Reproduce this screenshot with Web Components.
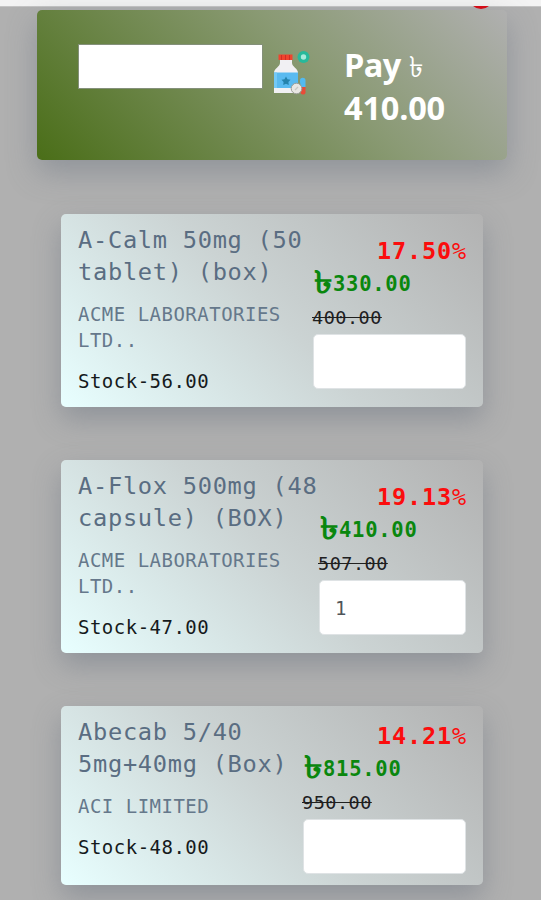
<!DOCTYPE html>
<html lang="en">
<head>
<meta charset="utf-8">
<title>Medicine order</title>
<style>
  body {
    margin: 0;
    height: 900px;
    overflow: hidden;
    background: #b0b0b0;
    font-family: "DejaVu Sans Mono", "Liberation Mono", monospace;
  }
</style>
</head>
<body>
<order-page>
  <pay-header amount="410.00"></pay-header>
  <medicine-card name="A-Calm 50mg (50 tablet) (box)" maker="ACME LABORATORIES LTD.." stock="56.00"
    discount="17.50%" price="330.00" old="400.00" style="--side: 153px"></medicine-card>
  <medicine-card name="A-Flox 500mg (48 capsule) (BOX)" maker="ACME LABORATORIES LTD.." stock="47.00"
    discount="19.13%" price="410.00" old="507.00" qty="1" style="--side: 147px"></medicine-card>
  <medicine-card name="Abecab 5/40 5mg+40mg (Box)" maker="ACI LIMITED" stock="48.00"
    discount="14.21%" price="815.00" old="950.00" style="--side: 163px; --height: 179px"></medicine-card>
</order-page>

<script>
class OrderPage extends HTMLElement {
  constructor() {
    super();
    this.attachShadow({mode: 'open'});
    this.shadowRoot.innerHTML = `
      <style>
        :host { display: flex; flex-direction: column; height: 900px; }
        .top {
          flex: none;
          display: flex;
          justify-content: flex-end;
          height: 6px;
          background: #f3f3f3;
          border-bottom: 1px solid #c4c4c4;
        }
        /* only the lower edge of the cart badge shows under the bar */
        .clip { position: relative; top: 6px; height: 4px; width: 24px; margin-right: 48px; overflow: hidden; }
        .badge { width: 24px; height: 24px; margin-top: -21px; border-radius: 50%; background: #d40c18; }
        .list { display: flex; flex-direction: column; gap: 53px; padding: 3px 34px 0 37px; }
      </style>
      <div class="top"><div class="clip"><div class="badge"></div></div></div>
      <div class="list"><slot></slot></div>
    `;
  }
}

class MedicineIcon extends HTMLElement {
  constructor() {
    super();
    this.attachShadow({mode: 'open'});
    this.shadowRoot.innerHTML = `
      <style>
        :host { display: block; width: 38px; height: 46px; }
        svg { display: block; }
      </style>
      <svg width="38" height="46" viewBox="0 0 38 46">
        <path d="M7 9h12v4c0 4 6 5 6 10v20H1V23c0-5 6-6 6-10z" fill="#f1f0f3"/>
        <path d="M5.500 4.500h14v5.500h-14z" fill="#f0442e"/>
        <path d="M8.500 5v5M12.500 5v5M16.500 5v5" stroke="#d02e25" stroke-width="1"/>
        <path d="M1 22.500h24v15.500H1z" fill="#59baf0"/>
        <path d="M1 22.500h3v15.500H1z" fill="#73c9f7"/>
        <path d="M13 26.500l1.500 2.700 3 .5-2.100 2.200.4 3.100-2.800-1.300-2.800 1.300.4-3.100-2.100-2.200 3-.5z" fill="#2583ad"/>
        <path d="M27 32v-1.500a2.700 2.700 0 0 1 5.500 0V37H28z" fill="#52baf1"/>
        <path d="M28 37h4.500v4.500a2.500 2.500 0 0 1-5 1z" fill="#e94b38"/>
        <circle cx="23.500" cy="38.500" r="5.300" fill="#e9e7e3" stroke="#9b9d97" stroke-width="1"/>
        <path d="M22 40l3-3" stroke="#c8c8c3" stroke-width="1.300"/>
        <circle cx="30.500" cy="7" r="6" fill="#27b99b"/>
        <circle cx="30.500" cy="7" r="2.700" fill="#a8eadb"/>
      </svg>
    `;
  }
}

class PayHeader extends HTMLElement {
  constructor() {
    super();
    this.attachShadow({mode: 'open'});
    this.shadowRoot.innerHTML = `
      <style>
        :host {
          display: flex;
          align-items: flex-start;
          box-sizing: border-box;
          height: 150px;
          margin-bottom: 1px;
          padding: 34px 41px;
          border-radius: 5px;
          background: linear-gradient(45deg, #4a6e18, #8a9a74 60%, #b0b0b0);
          box-shadow: 0 12px 30px rgba(98, 108, 122, .42);
        }
        input {
          box-sizing: border-box;
          width: 185px;
          height: 45px;
          border: 1px solid #84907a;
          background: #fff;
          padding: 0 8px;
          outline: none;
        }
        medicine-icon { margin: 6px 33px 0 10px; }
        .pay {
          width: 120px;
          color: #fff;
          font: 700 32.500px/42px "Open Sans", "Noto Sans", sans-serif;
          letter-spacing: -.6px;
        }
        .taka { font-weight: 400; font-size: 29px; }
        .sum { letter-spacing: -.2px; }
      </style>
      <input type="text" aria-label="Search">
      <medicine-icon></medicine-icon>
      <div class="pay">Pay <span class="taka">৳</span> <span class="sum"></span></div>
    `;
  }

  connectedCallback() {
    this.shadowRoot.querySelector('.sum').textContent = this.getAttribute('amount');
  }
}

class MedicineCard extends HTMLElement {
  constructor() {
    super();
    this.attachShadow({mode: 'open'});
    this.shadowRoot.innerHTML = `
      <style>
        :host {
          display: flex;
          justify-content: space-between;
          box-sizing: border-box;
          height: var(--height, 193px);
          margin: 0 24px;
          padding: 0 17px;
          border-radius: 5px;
          background: linear-gradient(45deg, #e8ffff, #cbd3d3 50%, #b2b2b2);
          box-shadow: 0 12px 28px rgba(98, 108, 122, .42);
        }
        .info { flex: 1; min-width: 0; padding-top: 9.500px; white-space: nowrap; }
        .name {
          width: 241px;
          margin-right: -20px;
          color: #5a6d82;
          font-size: 23.700px;
          line-height: 32.600px;
          letter-spacing: .7px;
          white-space: normal;
        }
        .maker {
          width: 222px;
          margin-top: 12px;
          color: #65788b;
          font-size: 19px;
          line-height: 26.400px;
          letter-spacing: .49px;
          white-space: normal;
        }
        .stock { margin-top: 14.500px; color: #151a1c; font-size: 19px; line-height: 26.400px; letter-spacing: .49px; }
        .side { align-self: center; width: var(--side); padding-top: 2px; font-weight: 700; }
        .discount { color: #fb0d0d; font-size: 23.500px; line-height: 35px; letter-spacing: .85px; margin-right: -1px; text-align: right; white-space: nowrap; }
        .discount span { font-weight: 400; }
        .price { display: flex; height: 32px; margin-left: 1px; color: #0a870e; font-size: 20.500px; line-height: 31px; letter-spacing: .75px; white-space: nowrap; }
        .taka { width: 19px; font-size: 31px; line-height: 26px; letter-spacing: 0; transform: scaleX(1.2); transform-origin: left; }
        .old { margin-left: -1px; color: #20201f; font-size: 18.500px; font-weight: 400; height: 32.600px; line-height: 34.600px; letter-spacing: .5px; }
        input {
          display: block;
          box-sizing: border-box;
          width: 100%;
          height: 55px;
          padding: 2px 15px 0;
          border: 1px solid #dfe3e5;
          border-radius: 5px;
          background: #fff;
          color: #50555a;
          font: 19px "DejaVu Sans Mono", monospace;
          outline: none;
        }
      </style>
      <div class="info">
        <div class="name"></div>
        <div class="maker"></div>
        <div class="stock">Stock-<span class="count"></span></div>
      </div>
      <div class="side">
        <div class="discount"></div>
        <div class="price"><span class="taka">৳</span><span class="now"></span></div>
        <div class="old"><s></s></div>
        <input type="text" aria-label="Quantity">
      </div>
    `;
  }

  connectedCallback() {
    const set = (selector, attr) => {
      this.shadowRoot.querySelector(selector).textContent = this.getAttribute(attr);
    };
    set('.name', 'name');
    set('.maker', 'maker');
    set('.count', 'stock');
    set('.now', 'price');
    set('s', 'old');

    // the percent sign is thinner than the figures
    const [figures] = this.getAttribute('discount').split('%');
    this.shadowRoot.querySelector('.discount').innerHTML = `${figures}<span>%</span>`;

    this.shadowRoot.querySelector('input').value = this.getAttribute('qty') || '';
  }
}

customElements.define('order-page', OrderPage);
customElements.define('medicine-icon', MedicineIcon);
customElements.define('pay-header', PayHeader);
customElements.define('medicine-card', MedicineCard);
</script>
</body>
</html>
